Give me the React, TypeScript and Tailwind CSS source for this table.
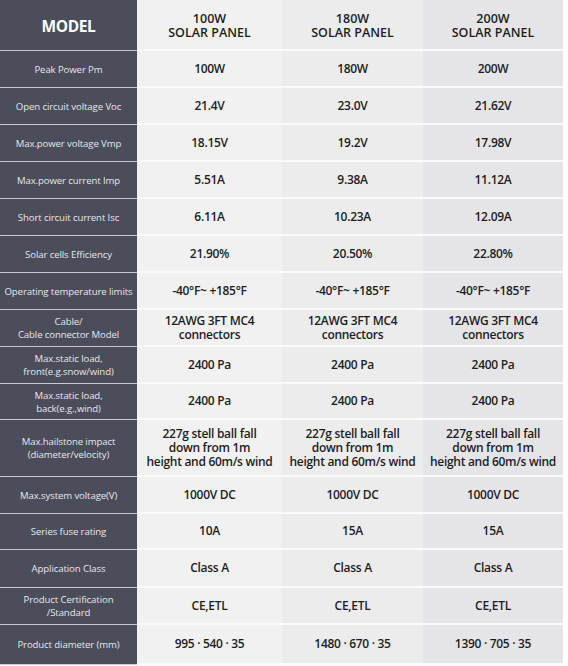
import React from 'react';

type Row = { label: string[]; values: string[][]; h: string };

// spec rows: label lines, one value (lines) per panel, row height class
const ROWS: Row[] = [
  { label: ['Peak Power Pm'], values: [['100W'], ['180W'], ['200W']], h: 'h-[37px]' },
  { label: ['Open circuit voltage Voc'], values: [['21.4V'], ['23.0V'], ['21.62V']], h: 'h-[37px]' },
  { label: ['Max.power voltage Vmp'], values: [['18.15V'], ['19.2V'], ['17.98V']], h: 'h-[37px]' },
  { label: ['Max.power current Imp'], values: [['5.51A'], ['9.38A'], ['11.12A']], h: 'h-[37px]' },
  { label: ['Short circuit current Isc'], values: [['6.11A'], ['10.23A'], ['12.09A']], h: 'h-[37px]' },
  { label: ['Solar cells Efficiency'], values: [['21.90%'], ['20.50%'], ['22.80%']], h: 'h-[37px]' },
  { label: ['Operating temperature limits'], values: [['-40°F~ +185°F'], ['-40°F~ +185°F'], ['-40°F~ +185°F']], h: 'h-[37px]' },
  {
    label: ['Cable/', 'Cable connector Model'],
    values: [['12AWG 3FT MC4', 'connectors'], ['12AWG 3FT MC4', 'connectors'], ['12AWG 3FT MC4', 'connectors']],
    h: 'h-[37px]',
  },
  { label: ['Max.static load,', 'front(e.g.snow/wind)'], values: [['2400 Pa'], ['2400 Pa'], ['2400 Pa']], h: 'h-[37px]' },
  { label: ['Max.static load,', 'back(e.g.,wind)'], values: [['2400 Pa'], ['2400 Pa'], ['2400 Pa']], h: 'h-[36px]' },
  {
    label: ['Max.hailstone impact', '(diameter/velocity)'],
    values: [
      ['227g stell ball fall', 'down from 1m', 'height and 60m/s wind'],
      ['227g stell ball fall', 'down from 1m', 'height and 60m/s wind'],
      ['227g stell ball fall', 'down from 1m', 'height and 60m/s wind'],
    ],
    h: 'h-[57px]',
  },
  { label: ['Max.system voltage(V)'], values: [['1000V DC'], ['1000V DC'], ['1000V DC']], h: 'h-[37px]' },
  { label: ['Series fuse rating'], values: [['10A'], ['15A'], ['15A']], h: 'h-[36px]' },
  { label: ['Application Class'], values: [['Class A'], ['Class A'], ['Class A']], h: 'h-[38px]' },
  { label: ['Product Certification', '/Standard'], values: [['CE,ETL'], ['CE,ETL'], ['CE,ETL']], h: 'h-[37px]' },
  { label: ['Product diameter (mm)'], values: [['995 · 540 · 35'], ['1480 · 670 · 35'], ['1390 · 705 · 35']], h: 'h-[40px]' },
];

const COL_BG = ['bg-[#f1f1f1]', 'bg-[#ececed]', 'bg-[#e5e5e7]'];

const App: React.FC = () => {
  return (
    <div className="w-[568px] h-[666px] bg-white font-['Open_Sans',sans-serif] overflow-hidden">
      <div className="w-[563px] flex flex-col">
        {/* Header */}
        <div className="grid grid-cols-[137px_145px_141px_140px] h-[51px]">
          <div className="bg-[#4b4d5b] flex items-center justify-center border-b border-[#c9cad0] pt-[4px]">
            <span className="text-white font-bold text-[15.5px] tracking-tight">MODEL</span>
          </div>
          {['100W', '180W', '200W'].map((w, i) => (
            <div
              key={w}
              className={`${COL_BG[i]} flex items-center justify-center border-b-2 border-[#fafafa] text-[#1d1d1f] font-semibold text-[12.5px] leading-[14px] text-center whitespace-pre-line pt-[3px]`}
            >
              {`${w}\nSOLAR PANEL`}
            </div>
          ))}
        </div>

        {/* Spec rows */}
        {ROWS.map((row, r) => (
          <div key={r} className={`grid grid-cols-[137px_145px_141px_140px] ${row.h}`}>
            <div className="bg-[#4b4d5b] flex items-center justify-center border-b border-[#c9cad0] text-[#e6e6ea] text-[9.6px] leading-[13px] text-center whitespace-pre-line tracking-[-0.1px]">
              {row.label.join('\n')}
            </div>
            {row.values.map((v, i) => (
              <div
                key={i}
                className={`${COL_BG[i]} flex items-center justify-center border-b-2 border-[#fafafa] text-[#1d1d1f] font-semibold text-[12px] leading-[14px] text-center whitespace-pre-line tracking-[-0.3px]`}
              >
                {v.join('\n')}
              </div>
            ))}
          </div>
        ))}
      </div>
    </div>
  );
};

export default App;
